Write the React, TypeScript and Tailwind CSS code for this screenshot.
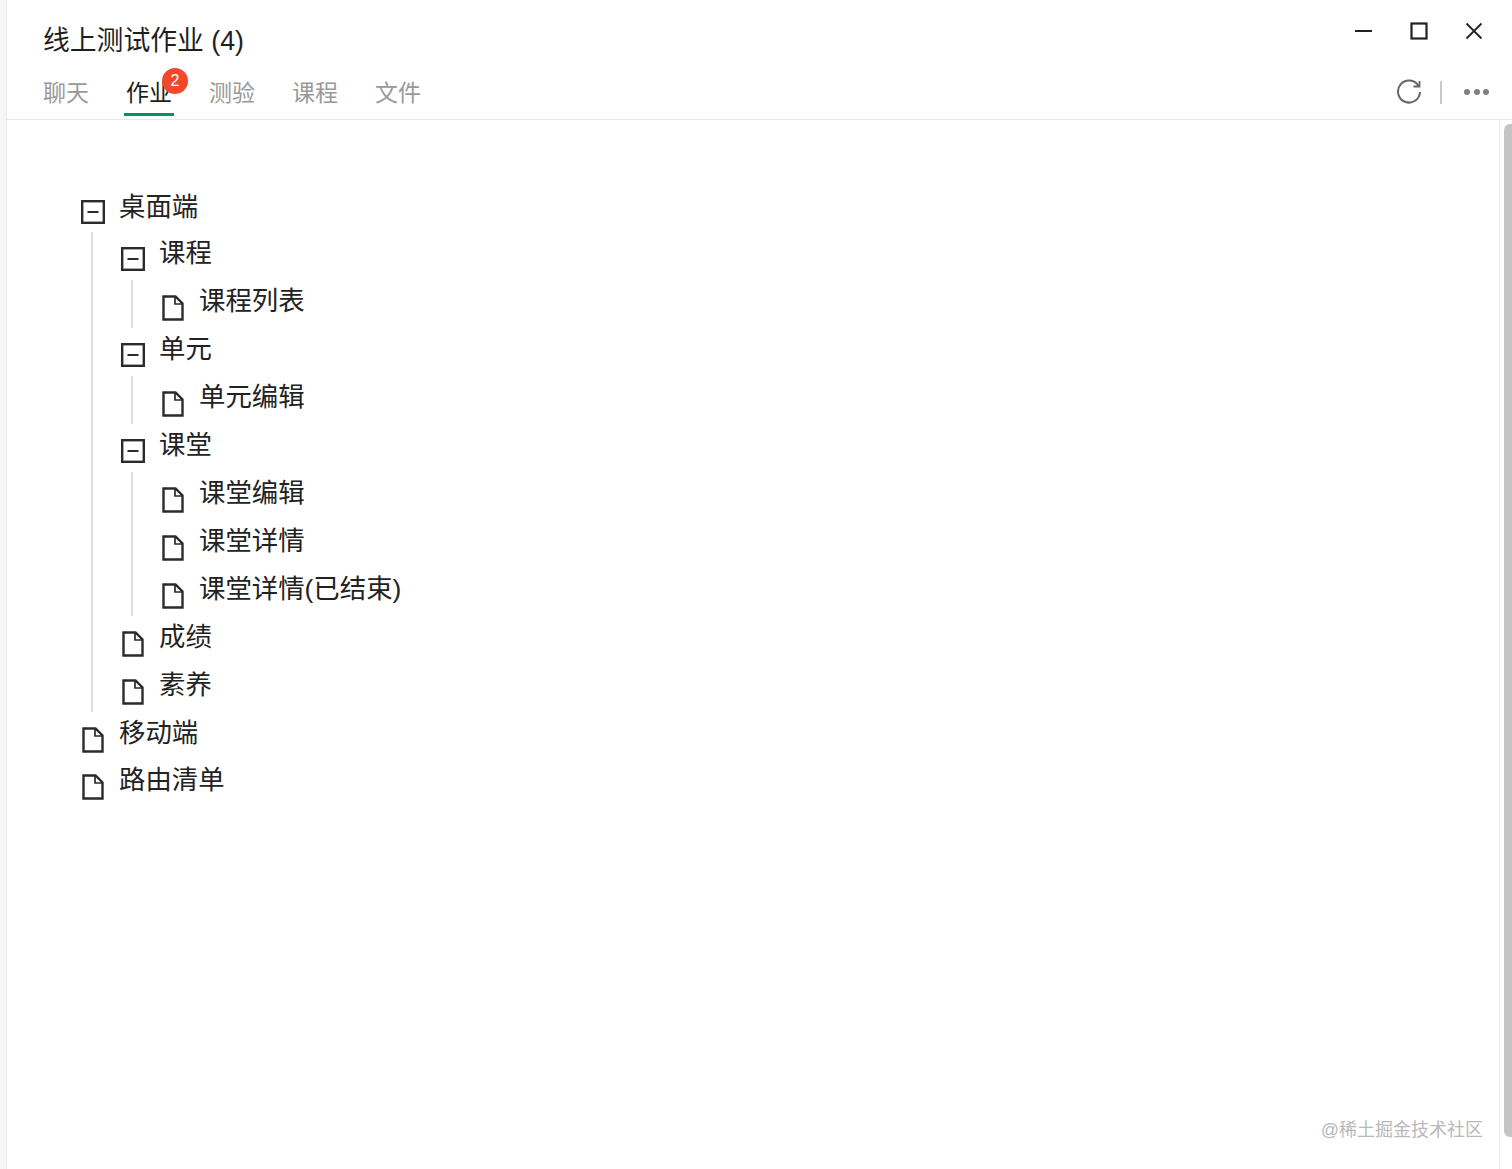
import type { ReactNode } from 'react'

const tabs = ['聊天', '作业', '测验', '课程', '文件']

function MinusBox() {
  return (
    <svg width="24" height="24" viewBox="0 0 24 24" fill="none" stroke="#2b2b2b" className="shrink-0">
      <rect x="1.2" y="1.2" width="21.6" height="21.6" strokeWidth="2.4" />
      <path d="M6.5 12h11" strokeWidth="2" />
    </svg>
  )
}

function FileIcon() {
  return (
    <svg width="24" height="26" viewBox="0 0 24 26" fill="none" stroke="#2b2b2b" strokeWidth="2.4" className="shrink-0">
      <path d="M2.5 1.5h12l7 7v16h-19z" />
      <path d="M14 1.5v7.5h7.5" strokeWidth="1.7" />
    </svg>
  )
}

function Row({ label, file, rowClass, iconClass }: { label: string; file?: boolean; rowClass?: string; iconClass?: string }) {
  return (
    <div className={`flex items-start ${rowClass ?? 'h-[48px]'}`}>
      <div className={`w-[24px] shrink-0 ${iconClass ?? 'mt-[15px]'}`}>{file ? <FileIcon /> : <MinusBox />}</div>
      <span className="ml-[15px] mt-[3px] -translate-x-px text-[26.4px] leading-[36px] text-[#222222]">{label}</span>
    </div>
  )
}

function Branch({ children }: { children: ReactNode }) {
  return <div className="ml-[10px] border-l-2 border-[#dddddd] pl-[28px]">{children}</div>
}

export default function App() {
  return (
    <div className="h-screen overflow-hidden bg-white flex font-['Liberation_Sans','Noto_Sans_CJK_SC',sans-serif] relative">
      <div className="w-[7px] shrink-0 bg-[#f6f6f6] border-r border-[#ececec]" />
      <div className="flex-1 flex flex-col min-w-0">
        <header className="h-[120px] shrink-0 border-b border-[#e9e9e9] flex flex-col pl-[36px] pr-[24px] relative">
          <div className="flex justify-between">
            <h1 className="mt-[23px] text-[26.8px] leading-[36px] text-[#1f1f1f] font-normal">线上测试作业 (4)</h1>
            <div className="flex items-center gap-[37px] pt-[22px] h-[40px] mr-[5px]">
              <svg width="18" height="18" viewBox="0 0 18 18" stroke="#222222" strokeWidth="2" fill="none">
                <path d="M0 9h17" />
              </svg>
              <svg width="18" height="18" viewBox="0 0 18 18" stroke="#222222" strokeWidth="2.2" fill="none">
                <rect x="1.5" y="1.5" width="15" height="15" />
              </svg>
              <svg width="18" height="18" viewBox="0 0 18 18" stroke="#222222" strokeWidth="1.8" fill="none">
                <path d="M1.5 1.5l15 15M16.5 1.5l-15 15" />
              </svg>
            </div>
          </div>
          <div className="flex items-start gap-[37px] mt-[18px] flex-1">
            {tabs.map((t) => (
              <div
                key={t}
                className={`relative h-[39px] text-[23px] leading-[32px] ${t === '作业' ? 'text-[#1c1c1c]' : 'text-[#999999]'}`}
              >
                {t}
                {t === '作业' && (
                  <>
                    <span className="absolute left-[36px] top-[-9px] w-[26px] h-[26px] rounded-full bg-[#f5482a] text-white text-[16px] leading-[26px] text-center">
                      2
                    </span>
                    <span className="absolute left-[-2px] right-[-2px] bottom-0 h-[3px] bg-[#07925f]" />
                  </>
                )}
              </div>
            ))}
          </div>
          <div className="absolute right-[23px] bottom-[14px] flex items-center">
            <svg width="26" height="26" viewBox="0 0 26 26" fill="none" stroke="#666666" strokeWidth="2">
              <path d="M22.5 7A11 11 0 1 0 24 13" />
              <path d="M17.5 7.5h6V2" strokeWidth="1.8" />
            </svg>
            <span className="ml-[18px] w-[2px] h-[23px] bg-[#c9c9c9]" />
            <div className="ml-[22px] flex gap-[3.5px]">
              <span className="w-[6px] h-[6px] rounded-full bg-[#808080]" />
              <span className="w-[6px] h-[6px] rounded-full bg-[#808080]" />
              <span className="w-[6px] h-[6px] rounded-full bg-[#808080]" />
            </div>
          </div>
        </header>
        <div className="flex flex-1 min-h-0">
          <main className="flex-1 pt-[66px] pl-[74px]">
            <Row label="桌面端" rowClass="h-[46px]" iconClass="mt-[14px]" />
            <Branch>
              <Row label="课程" />
              <Branch>
                <Row label="课程列表" file />
              </Branch>
              <Row label="单元" />
              <Branch>
                <Row label="单元编辑" file />
              </Branch>
              <Row label="课堂" />
              <Branch>
                <Row label="课堂编辑" file />
                <Row label="课堂详情" file />
                <Row label="课堂详情(已结束)" file />
              </Branch>
              <Row label="成绩" file />
              <Row label="素养" file />
            </Branch>
            <Row label="移动端" file rowClass="h-[47px]" />
            <Row label="路由清单" file />
          </main>
          <aside className="w-[13px] shrink-0 border-l border-[#ececec] pl-[4px] pt-[4px] pb-[32px] bg-white">
            <div className="h-full rounded-l-[6px] bg-[#c4c4c4]" />
          </aside>
        </div>
      </div>
      <span className="absolute right-[29px] bottom-[26px] text-[18px] leading-[26px] text-[#b8b8b8]">@稀土掘金技术社区</span>
    </div>
  )
}
